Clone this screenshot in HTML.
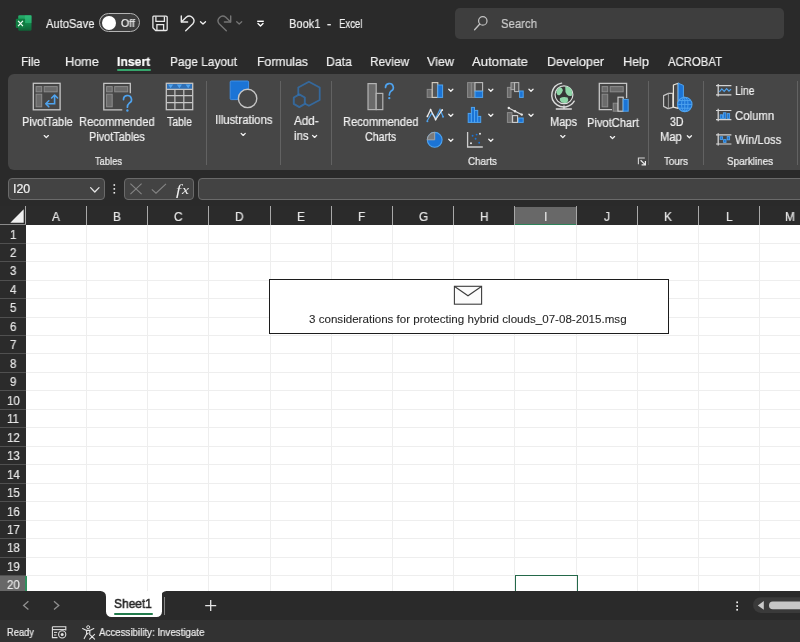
<!DOCTYPE html>
<html lang="en"><head><meta charset="utf-8"><title>Book1 - Excel</title>
<style>
html,body{margin:0;padding:0;background:#2a2a2a;}
#app{position:relative;width:800px;height:642px;overflow:hidden;background:#2a2a2a;font-family:"Liberation Sans", sans-serif;}
#app svg{position:absolute;overflow:visible;}
#app>div{will-change:transform;}
</style></head><body><div id="app">
<div style="position:absolute;left:8px;top:74.3px;width:800px;height:95.6px;background:#464646;border-radius:6px 0 0 6px;"></div>
<div style="position:absolute;left:99.4px;top:13px;width:39px;height:17.4px;border:1.4px solid #b4b4b4;border-radius:11px;background:#3c3c3c;"></div>
<div style="position:absolute;left:101.8px;top:16.1px;width:13.8px;height:13.8px;border-radius:50%;background:#fff;"></div>
<div style="position:absolute;left:454.8px;top:7.8px;width:329.4px;height:31.2px;background:#3e3e3e;border-radius:5px;"></div>
<div style="position:absolute;left:117px;top:69.2px;width:34px;height:2.1px;background:#36a66c;border-radius:1px;"></div>
<div style="position:absolute;left:206.2px;top:80.5px;width:1.4px;height:83.5px;background:#626262;"></div>
<div style="position:absolute;left:280px;top:80.5px;width:1.4px;height:83.5px;background:#626262;"></div>
<div style="position:absolute;left:331.4px;top:80.5px;width:1.4px;height:83.5px;background:#626262;"></div>
<div style="position:absolute;left:648.2px;top:80.5px;width:1.4px;height:83.5px;background:#626262;"></div>
<div style="position:absolute;left:703.2px;top:80.5px;width:1.4px;height:83.5px;background:#626262;"></div>
<div style="position:absolute;left:796.6px;top:80.5px;width:1.4px;height:83.5px;background:#626262;"></div>
<div style="position:absolute;left:8px;top:178px;width:96.8px;height:22.4px;background:#434343;border:1px solid #6a6a6a;border-radius:4px;box-sizing:border-box;"></div>
<div style="position:absolute;left:123.8px;top:178px;width:70px;height:22.4px;background:#434343;border:1px solid #6a6a6a;border-radius:4px;box-sizing:border-box;"></div>
<div style="position:absolute;left:198px;top:178px;width:620px;height:22.4px;background:#434343;border:1px solid #6a6a6a;border-radius:4px;box-sizing:border-box;"></div>
<div style="position:absolute;left:0px;top:206.2px;width:800px;height:385.8px;background:#2b2b2b;"></div>
<div style="position:absolute;left:26.3px;top:224.7px;width:773.7px;height:367.3px;background:#ffffff;"></div>
<div style="position:absolute;left:514.89px;top:207.2px;width:61.18px;height:17.5px;background:#686868;"></div>
<div style="position:absolute;left:514.89px;top:223.6px;width:61.18px;height:1.1px;background:#2d8259;"></div>
<div style="position:absolute;left:0px;top:575.4970000000001px;width:26.0px;height:18.463px;background:#686868;"></div>
<div style="position:absolute;left:24.7px;top:575.4970000000001px;width:1.5px;height:18.463px;background:#2f8f5d;"></div>
<div style="position:absolute;left:86.13px;top:224.7px;width:1px;height:367.3px;background:#eeeeee;"></div>
<div style="position:absolute;left:86.13px;top:206.2px;width:1px;height:18.5px;background:#a8a8a8;"></div>
<div style="position:absolute;left:147.31px;top:224.7px;width:1px;height:367.3px;background:#eeeeee;"></div>
<div style="position:absolute;left:147.31px;top:206.2px;width:1px;height:18.5px;background:#a8a8a8;"></div>
<div style="position:absolute;left:208.49px;top:224.7px;width:1px;height:367.3px;background:#eeeeee;"></div>
<div style="position:absolute;left:208.49px;top:206.2px;width:1px;height:18.5px;background:#a8a8a8;"></div>
<div style="position:absolute;left:269.67px;top:224.7px;width:1px;height:367.3px;background:#eeeeee;"></div>
<div style="position:absolute;left:269.67px;top:206.2px;width:1px;height:18.5px;background:#a8a8a8;"></div>
<div style="position:absolute;left:330.85px;top:224.7px;width:1px;height:367.3px;background:#eeeeee;"></div>
<div style="position:absolute;left:330.85px;top:206.2px;width:1px;height:18.5px;background:#a8a8a8;"></div>
<div style="position:absolute;left:392.03px;top:224.7px;width:1px;height:367.3px;background:#eeeeee;"></div>
<div style="position:absolute;left:392.03px;top:206.2px;width:1px;height:18.5px;background:#a8a8a8;"></div>
<div style="position:absolute;left:453.21px;top:224.7px;width:1px;height:367.3px;background:#eeeeee;"></div>
<div style="position:absolute;left:453.21px;top:206.2px;width:1px;height:18.5px;background:#a8a8a8;"></div>
<div style="position:absolute;left:514.39px;top:224.7px;width:1px;height:367.3px;background:#eeeeee;"></div>
<div style="position:absolute;left:514.39px;top:206.2px;width:1px;height:18.5px;background:#a8a8a8;"></div>
<div style="position:absolute;left:575.57px;top:224.7px;width:1px;height:367.3px;background:#eeeeee;"></div>
<div style="position:absolute;left:575.57px;top:206.2px;width:1px;height:18.5px;background:#a8a8a8;"></div>
<div style="position:absolute;left:636.75px;top:224.7px;width:1px;height:367.3px;background:#eeeeee;"></div>
<div style="position:absolute;left:636.75px;top:206.2px;width:1px;height:18.5px;background:#a8a8a8;"></div>
<div style="position:absolute;left:697.93px;top:224.7px;width:1px;height:367.3px;background:#eeeeee;"></div>
<div style="position:absolute;left:697.93px;top:206.2px;width:1px;height:18.5px;background:#a8a8a8;"></div>
<div style="position:absolute;left:759.11px;top:224.7px;width:1px;height:367.3px;background:#eeeeee;"></div>
<div style="position:absolute;left:759.11px;top:206.2px;width:1px;height:18.5px;background:#a8a8a8;"></div>
<div style="position:absolute;left:820.29px;top:224.7px;width:1px;height:367.3px;background:#eeeeee;"></div>
<div style="position:absolute;left:820.29px;top:206.2px;width:1px;height:18.5px;background:#a8a8a8;"></div>
<div style="position:absolute;left:25.400000000000002px;top:206.2px;width:1px;height:18.5px;background:#a8a8a8;"></div>
<div style="position:absolute;left:26.3px;top:242.66px;width:773.7px;height:1px;background:#eeeeee;"></div>
<div style="position:absolute;left:0px;top:242.66px;width:25.5px;height:1px;background:#505050;"></div>
<div style="position:absolute;left:26.3px;top:261.13px;width:773.7px;height:1px;background:#eeeeee;"></div>
<div style="position:absolute;left:0px;top:261.13px;width:25.5px;height:1px;background:#505050;"></div>
<div style="position:absolute;left:26.3px;top:279.59px;width:773.7px;height:1px;background:#eeeeee;"></div>
<div style="position:absolute;left:0px;top:279.59px;width:25.5px;height:1px;background:#505050;"></div>
<div style="position:absolute;left:26.3px;top:298.05px;width:773.7px;height:1px;background:#eeeeee;"></div>
<div style="position:absolute;left:0px;top:298.05px;width:25.5px;height:1px;background:#505050;"></div>
<div style="position:absolute;left:26.3px;top:316.51px;width:773.7px;height:1px;background:#eeeeee;"></div>
<div style="position:absolute;left:0px;top:316.51px;width:25.5px;height:1px;background:#505050;"></div>
<div style="position:absolute;left:26.3px;top:334.98px;width:773.7px;height:1px;background:#eeeeee;"></div>
<div style="position:absolute;left:0px;top:334.98px;width:25.5px;height:1px;background:#505050;"></div>
<div style="position:absolute;left:26.3px;top:353.44px;width:773.7px;height:1px;background:#eeeeee;"></div>
<div style="position:absolute;left:0px;top:353.44px;width:25.5px;height:1px;background:#505050;"></div>
<div style="position:absolute;left:26.3px;top:371.9px;width:773.7px;height:1px;background:#eeeeee;"></div>
<div style="position:absolute;left:0px;top:371.9px;width:25.5px;height:1px;background:#505050;"></div>
<div style="position:absolute;left:26.3px;top:390.37px;width:773.7px;height:1px;background:#eeeeee;"></div>
<div style="position:absolute;left:0px;top:390.37px;width:25.5px;height:1px;background:#505050;"></div>
<div style="position:absolute;left:26.3px;top:408.83px;width:773.7px;height:1px;background:#eeeeee;"></div>
<div style="position:absolute;left:0px;top:408.83px;width:25.5px;height:1px;background:#505050;"></div>
<div style="position:absolute;left:26.3px;top:427.29px;width:773.7px;height:1px;background:#eeeeee;"></div>
<div style="position:absolute;left:0px;top:427.29px;width:25.5px;height:1px;background:#505050;"></div>
<div style="position:absolute;left:26.3px;top:445.76px;width:773.7px;height:1px;background:#eeeeee;"></div>
<div style="position:absolute;left:0px;top:445.76px;width:25.5px;height:1px;background:#505050;"></div>
<div style="position:absolute;left:26.3px;top:464.22px;width:773.7px;height:1px;background:#eeeeee;"></div>
<div style="position:absolute;left:0px;top:464.22px;width:25.5px;height:1px;background:#505050;"></div>
<div style="position:absolute;left:26.3px;top:482.68px;width:773.7px;height:1px;background:#eeeeee;"></div>
<div style="position:absolute;left:0px;top:482.68px;width:25.5px;height:1px;background:#505050;"></div>
<div style="position:absolute;left:26.3px;top:501.14px;width:773.7px;height:1px;background:#eeeeee;"></div>
<div style="position:absolute;left:0px;top:501.14px;width:25.5px;height:1px;background:#505050;"></div>
<div style="position:absolute;left:26.3px;top:519.61px;width:773.7px;height:1px;background:#eeeeee;"></div>
<div style="position:absolute;left:0px;top:519.61px;width:25.5px;height:1px;background:#505050;"></div>
<div style="position:absolute;left:26.3px;top:538.07px;width:773.7px;height:1px;background:#eeeeee;"></div>
<div style="position:absolute;left:0px;top:538.07px;width:25.5px;height:1px;background:#505050;"></div>
<div style="position:absolute;left:26.3px;top:556.53px;width:773.7px;height:1px;background:#eeeeee;"></div>
<div style="position:absolute;left:0px;top:556.53px;width:25.5px;height:1px;background:#505050;"></div>
<div style="position:absolute;left:26.3px;top:575.0px;width:773.7px;height:1px;background:#eeeeee;"></div>
<div style="position:absolute;left:0px;top:575.0px;width:25.5px;height:1px;background:#505050;"></div>
<div style="position:absolute;left:0px;top:224.1px;width:25.5px;height:1px;background:#8a8a8a;"></div>
<svg style="left:9.6px;top:208.8px" width="14" height="14" viewBox="0 0 14 14"><path d="M13.7 0.3V13.7H0.3Z" fill="#f0f0f0"/></svg>
<div style="position:absolute;left:514.6px;top:574.6px;width:62.7px;height:20.5px;border:1.5px solid #24694a;box-sizing:border-box;"></div>
<div style="position:absolute;left:268.7px;top:278.7px;width:399.8px;height:55.2px;background:#fff;border:1.7px solid #1c1c1c;box-sizing:border-box;"></div>
<div style="position:absolute;left:0px;top:591.3px;width:800px;height:30px;background:#ffffff;"></div>
<div style="position:absolute;left:0px;top:591.3px;width:105.7px;height:29.2px;background:#2a2a2a;border-radius:0 5.5px 0 0;"></div>
<div style="position:absolute;left:161.4px;top:591.3px;width:640px;height:29.2px;background:#2a2a2a;border-radius:5.5px 0 0 0;"></div>
<div style="position:absolute;left:100px;top:612px;width:70px;height:8.5px;background:#2a2a2a;"></div>
<div style="position:absolute;left:0px;top:620.3px;width:800px;height:22px;background:#323232;"></div>
<div style="position:absolute;left:105.7px;top:591px;width:55.7px;height:26.3px;background:#fff;border-radius:0 0 5.5px 5.5px;"></div>
<div style="position:absolute;left:113.9px;top:612.6px;width:39px;height:2.2px;background:#217a4b;border-radius:1px;"></div>
<div style="position:absolute;left:164.2px;top:597.4px;width:1.2px;height:17.5px;background:#858585;"></div>
<div style='position:absolute;left:45.6px;top:14.54px;line-height:17.92px;height:17.92px;white-space:nowrap;font-family:"Liberation Sans", sans-serif;font-size:12.8px;font-weight:400;color:#f0f0f0;transform-origin:0 50%;transform:scaleX(0.8721);-webkit-text-stroke:0.22px #f0f0f0;'>AutoSave</div>
<div style='position:absolute;left:120.6px;top:15.6px;line-height:15.4px;height:15.4px;white-space:nowrap;font-family:"Liberation Sans", sans-serif;font-size:11px;font-weight:400;color:#f0f0f0;transform-origin:0 50%;transform:scaleX(0.9528);-webkit-text-stroke:0.22px #f0f0f0;'>Off</div>
<div style='position:absolute;left:288.6px;top:14.54px;line-height:17.92px;height:17.92px;white-space:nowrap;font-family:"Liberation Sans", sans-serif;font-size:12.8px;font-weight:400;color:#f0f0f0;transform-origin:0 50%;transform:scaleX(0.8651);-webkit-text-stroke:0.22px #f0f0f0;'>Book1</div>
<div style='position:absolute;left:327px;top:14.54px;line-height:17.92px;height:17.92px;white-space:nowrap;font-family:"Liberation Sans", sans-serif;font-size:12.8px;font-weight:400;color:#f0f0f0;transform-origin:0 50%;transform:scaleX(0.9846);-webkit-text-stroke:0.22px #f0f0f0;'>-</div>
<div style='position:absolute;left:338.6px;top:14.54px;line-height:17.92px;height:17.92px;white-space:nowrap;font-family:"Liberation Sans", sans-serif;font-size:12.8px;font-weight:400;color:#f0f0f0;transform-origin:0 50%;transform:scaleX(0.7477);-webkit-text-stroke:0.22px #f0f0f0;'>Excel</div>
<div style='position:absolute;left:501.2px;top:14.54px;line-height:17.92px;height:17.92px;white-space:nowrap;font-family:"Liberation Sans", sans-serif;font-size:12.8px;font-weight:400;color:#cdcdcd;transform-origin:0 50%;transform:scaleX(0.8879);-webkit-text-stroke:0.22px #cdcdcd;'>Search</div>
<div style='position:absolute;left:21px;top:52.76px;line-height:18.48px;height:18.48px;white-space:nowrap;font-family:"Liberation Sans", sans-serif;font-size:13.2px;font-weight:400;color:#f0f0f0;transform-origin:0 50%;transform:scaleX(0.8941);-webkit-text-stroke:0.22px #f0f0f0;'>File</div>
<div style='position:absolute;left:65px;top:52.76px;line-height:18.48px;height:18.48px;white-space:nowrap;font-family:"Liberation Sans", sans-serif;font-size:13.2px;font-weight:400;color:#f0f0f0;transform-origin:0 50%;transform:scaleX(0.9663);-webkit-text-stroke:0.22px #f0f0f0;'>Home</div>
<div style='position:absolute;left:169.6px;top:52.76px;line-height:18.48px;height:18.48px;white-space:nowrap;font-family:"Liberation Sans", sans-serif;font-size:13.2px;font-weight:400;color:#f0f0f0;transform-origin:0 50%;transform:scaleX(0.9046);-webkit-text-stroke:0.22px #f0f0f0;'>Page Layout</div>
<div style='position:absolute;left:257px;top:52.76px;line-height:18.48px;height:18.48px;white-space:nowrap;font-family:"Liberation Sans", sans-serif;font-size:13.2px;font-weight:400;color:#f0f0f0;transform-origin:0 50%;transform:scaleX(0.9278);-webkit-text-stroke:0.22px #f0f0f0;'>Formulas</div>
<div style='position:absolute;left:326px;top:52.76px;line-height:18.48px;height:18.48px;white-space:nowrap;font-family:"Liberation Sans", sans-serif;font-size:13.2px;font-weight:400;color:#f0f0f0;transform-origin:0 50%;transform:scaleX(0.9333);-webkit-text-stroke:0.22px #f0f0f0;'>Data</div>
<div style='position:absolute;left:370px;top:52.76px;line-height:18.48px;height:18.48px;white-space:nowrap;font-family:"Liberation Sans", sans-serif;font-size:13.2px;font-weight:400;color:#f0f0f0;transform-origin:0 50%;transform:scaleX(0.9017);-webkit-text-stroke:0.22px #f0f0f0;'>Review</div>
<div style='position:absolute;left:427px;top:52.76px;line-height:18.48px;height:18.48px;white-space:nowrap;font-family:"Liberation Sans", sans-serif;font-size:13.2px;font-weight:400;color:#f0f0f0;transform-origin:0 50%;transform:scaleX(0.9521);-webkit-text-stroke:0.22px #f0f0f0;'>View</div>
<div style='position:absolute;left:472px;top:52.76px;line-height:18.48px;height:18.48px;white-space:nowrap;font-family:"Liberation Sans", sans-serif;font-size:13.2px;font-weight:400;color:#f0f0f0;transform-origin:0 50%;transform:scaleX(0.9920);-webkit-text-stroke:0.22px #f0f0f0;'>Automate</div>
<div style='position:absolute;left:547px;top:52.76px;line-height:18.48px;height:18.48px;white-space:nowrap;font-family:"Liberation Sans", sans-serif;font-size:13.2px;font-weight:400;color:#f0f0f0;transform-origin:0 50%;transform:scaleX(0.9480);-webkit-text-stroke:0.22px #f0f0f0;'>Developer</div>
<div style='position:absolute;left:623px;top:52.76px;line-height:18.48px;height:18.48px;white-space:nowrap;font-family:"Liberation Sans", sans-serif;font-size:13.2px;font-weight:400;color:#f0f0f0;transform-origin:0 50%;transform:scaleX(0.9585);-webkit-text-stroke:0.22px #f0f0f0;'>Help</div>
<div style='position:absolute;left:668px;top:52.76px;line-height:18.48px;height:18.48px;white-space:nowrap;font-family:"Liberation Sans", sans-serif;font-size:13.2px;font-weight:400;color:#f0f0f0;transform-origin:0 50%;transform:scaleX(0.8601);-webkit-text-stroke:0.22px #f0f0f0;'>ACROBAT</div>
<div style='position:absolute;left:117.2px;top:52.76px;line-height:18.48px;height:18.48px;white-space:nowrap;font-family:"Liberation Sans", sans-serif;font-size:13.2px;font-weight:700;color:#ffffff;transform-origin:0 50%;transform:scaleX(0.9242);-webkit-text-stroke:0.22px #ffffff;'>Insert</div>
<div style='position:absolute;left:21.8px;top:114.39px;line-height:17.22px;height:17.22px;white-space:nowrap;font-family:"Liberation Sans", sans-serif;font-size:12.3px;font-weight:400;color:#f0f0f0;transform-origin:0 50%;transform:scaleX(0.8916);-webkit-text-stroke:0.22px #f0f0f0;'>PivotTable</div>
<div style='position:absolute;left:79.3px;top:114.39px;line-height:17.22px;height:17.22px;white-space:nowrap;font-family:"Liberation Sans", sans-serif;font-size:12.3px;font-weight:400;color:#f0f0f0;transform-origin:0 50%;transform:scaleX(0.9078);-webkit-text-stroke:0.22px #f0f0f0;'>Recommended</div>
<div style='position:absolute;left:89.3px;top:129.39px;line-height:17.22px;height:17.22px;white-space:nowrap;font-family:"Liberation Sans", sans-serif;font-size:12.3px;font-weight:400;color:#f0f0f0;transform-origin:0 50%;transform:scaleX(0.8857);-webkit-text-stroke:0.22px #f0f0f0;'>PivotTables</div>
<div style='position:absolute;left:167px;top:114.39px;line-height:17.22px;height:17.22px;white-space:nowrap;font-family:"Liberation Sans", sans-serif;font-size:12.3px;font-weight:400;color:#f0f0f0;transform-origin:0 50%;transform:scaleX(0.8502);-webkit-text-stroke:0.22px #f0f0f0;'>Table</div>
<div style='position:absolute;left:95px;top:154.06px;line-height:15.68px;height:15.68px;white-space:nowrap;font-family:"Liberation Sans", sans-serif;font-size:11.2px;font-weight:400;color:#f0f0f0;transform-origin:0 50%;transform:scaleX(0.8348);-webkit-text-stroke:0.22px #f0f0f0;'>Tables</div>
<div style='position:absolute;left:214.5px;top:112.39px;line-height:17.22px;height:17.22px;white-space:nowrap;font-family:"Liberation Sans", sans-serif;font-size:12.3px;font-weight:400;color:#f0f0f0;transform-origin:0 50%;transform:scaleX(0.9244);-webkit-text-stroke:0.22px #f0f0f0;'>Illustrations</div>
<div style='position:absolute;left:293.8px;top:112.99px;line-height:17.22px;height:17.22px;white-space:nowrap;font-family:"Liberation Sans", sans-serif;font-size:12.3px;font-weight:400;color:#f0f0f0;transform-origin:0 50%;transform:scaleX(0.9467);-webkit-text-stroke:0.22px #f0f0f0;'>Add-</div>
<div style='position:absolute;left:293.8px;top:127.79px;line-height:17.22px;height:17.22px;white-space:nowrap;font-family:"Liberation Sans", sans-serif;font-size:12.3px;font-weight:400;color:#f0f0f0;transform-origin:0 50%;transform:scaleX(0.9279);-webkit-text-stroke:0.22px #f0f0f0;'>ins</div>
<div style='position:absolute;left:342.9px;top:114.39px;line-height:17.22px;height:17.22px;white-space:nowrap;font-family:"Liberation Sans", sans-serif;font-size:12.3px;font-weight:400;color:#f0f0f0;transform-origin:0 50%;transform:scaleX(0.9054);-webkit-text-stroke:0.22px #f0f0f0;'>Recommended</div>
<div style='position:absolute;left:365px;top:129.39px;line-height:17.22px;height:17.22px;white-space:nowrap;font-family:"Liberation Sans", sans-serif;font-size:12.3px;font-weight:400;color:#f0f0f0;transform-origin:0 50%;transform:scaleX(0.8614);-webkit-text-stroke:0.22px #f0f0f0;'>Charts</div>
<div style='position:absolute;left:549.8px;top:114.39px;line-height:17.22px;height:17.22px;white-space:nowrap;font-family:"Liberation Sans", sans-serif;font-size:12.3px;font-weight:400;color:#f0f0f0;transform-origin:0 50%;transform:scaleX(0.8977);-webkit-text-stroke:0.22px #f0f0f0;'>Maps</div>
<div style='position:absolute;left:587.3px;top:114.79px;line-height:17.22px;height:17.22px;white-space:nowrap;font-family:"Liberation Sans", sans-serif;font-size:12.3px;font-weight:400;color:#f0f0f0;transform-origin:0 50%;transform:scaleX(0.9038);-webkit-text-stroke:0.22px #f0f0f0;'>PivotChart</div>
<div style='position:absolute;left:468px;top:154.06px;line-height:15.68px;height:15.68px;white-space:nowrap;font-family:"Liberation Sans", sans-serif;font-size:11.2px;font-weight:400;color:#f0f0f0;transform-origin:0 50%;transform:scaleX(0.8800);-webkit-text-stroke:0.22px #f0f0f0;'>Charts</div>
<div style='position:absolute;left:669.6px;top:114.29px;line-height:17.22px;height:17.22px;white-space:nowrap;font-family:"Liberation Sans", sans-serif;font-size:12.3px;font-weight:400;color:#f0f0f0;transform-origin:0 50%;transform:scaleX(0.8643);-webkit-text-stroke:0.22px #f0f0f0;'>3D</div>
<div style='position:absolute;left:660px;top:129.29px;line-height:17.22px;height:17.22px;white-space:nowrap;font-family:"Liberation Sans", sans-serif;font-size:12.3px;font-weight:400;color:#f0f0f0;transform-origin:0 50%;transform:scaleX(0.9113);-webkit-text-stroke:0.22px #f0f0f0;'>Map</div>
<div style='position:absolute;left:664px;top:154.06px;line-height:15.68px;height:15.68px;white-space:nowrap;font-family:"Liberation Sans", sans-serif;font-size:11.2px;font-weight:400;color:#f0f0f0;transform-origin:0 50%;transform:scaleX(0.8772);-webkit-text-stroke:0.22px #f0f0f0;'>Tours</div>
<div style='position:absolute;left:735px;top:82.69px;line-height:17.22px;height:17.22px;white-space:nowrap;font-family:"Liberation Sans", sans-serif;font-size:12.3px;font-weight:400;color:#f0f0f0;transform-origin:0 50%;transform:scaleX(0.8344);-webkit-text-stroke:0.22px #f0f0f0;'>Line</div>
<div style='position:absolute;left:735px;top:107.59px;line-height:17.22px;height:17.22px;white-space:nowrap;font-family:"Liberation Sans", sans-serif;font-size:12.3px;font-weight:400;color:#f0f0f0;transform-origin:0 50%;transform:scaleX(0.9251);-webkit-text-stroke:0.22px #f0f0f0;'>Column</div>
<div style='position:absolute;left:735px;top:132.19px;line-height:17.22px;height:17.22px;white-space:nowrap;font-family:"Liberation Sans", sans-serif;font-size:12.3px;font-weight:400;color:#f0f0f0;transform-origin:0 50%;transform:scaleX(0.9134);-webkit-text-stroke:0.22px #f0f0f0;'>Win/Loss</div>
<div style='position:absolute;left:727px;top:154.06px;line-height:15.68px;height:15.68px;white-space:nowrap;font-family:"Liberation Sans", sans-serif;font-size:11.2px;font-weight:400;color:#f0f0f0;transform-origin:0 50%;transform:scaleX(0.8806);-webkit-text-stroke:0.22px #f0f0f0;'>Sparklines</div>
<div style='position:absolute;left:12.8px;top:180.99px;line-height:17.22px;height:17.22px;white-space:nowrap;font-family:"Liberation Sans", sans-serif;font-size:12.3px;font-weight:400;color:#f0f0f0;transform-origin:0 50%;transform:scaleX(1.0053);-webkit-text-stroke:0.22px #f0f0f0;'>I20</div>
<div style='position:absolute;left:52.11px;top:208.62px;line-height:17.36px;height:17.36px;white-space:nowrap;font-family:"Liberation Sans", sans-serif;font-size:12.4px;font-weight:400;color:#e6e6e6;transform-origin:0 50%;transform:scaleX(0.9500);-webkit-text-stroke:0.22px #e6e6e6;'>A</div>
<div style='position:absolute;left:113.29px;top:208.62px;line-height:17.36px;height:17.36px;white-space:nowrap;font-family:"Liberation Sans", sans-serif;font-size:12.4px;font-weight:400;color:#e6e6e6;transform-origin:0 50%;transform:scaleX(0.9500);-webkit-text-stroke:0.22px #e6e6e6;'>B</div>
<div style='position:absolute;left:174.15px;top:208.62px;line-height:17.36px;height:17.36px;white-space:nowrap;font-family:"Liberation Sans", sans-serif;font-size:12.4px;font-weight:400;color:#e6e6e6;transform-origin:0 50%;transform:scaleX(0.9500);-webkit-text-stroke:0.22px #e6e6e6;'>C</div>
<div style='position:absolute;left:235.33px;top:208.62px;line-height:17.36px;height:17.36px;white-space:nowrap;font-family:"Liberation Sans", sans-serif;font-size:12.4px;font-weight:400;color:#e6e6e6;transform-origin:0 50%;transform:scaleX(0.9500);-webkit-text-stroke:0.22px #e6e6e6;'>D</div>
<div style='position:absolute;left:296.83px;top:208.62px;line-height:17.36px;height:17.36px;white-space:nowrap;font-family:"Liberation Sans", sans-serif;font-size:12.4px;font-weight:400;color:#e6e6e6;transform-origin:0 50%;transform:scaleX(0.9500);-webkit-text-stroke:0.22px #e6e6e6;'>E</div>
<div style='position:absolute;left:358.34px;top:208.62px;line-height:17.36px;height:17.36px;white-space:nowrap;font-family:"Liberation Sans", sans-serif;font-size:12.4px;font-weight:400;color:#e6e6e6;transform-origin:0 50%;transform:scaleX(0.9500);-webkit-text-stroke:0.22px #e6e6e6;'>F</div>
<div style='position:absolute;left:418.54px;top:208.62px;line-height:17.36px;height:17.36px;white-space:nowrap;font-family:"Liberation Sans", sans-serif;font-size:12.4px;font-weight:400;color:#e6e6e6;transform-origin:0 50%;transform:scaleX(0.9500);-webkit-text-stroke:0.22px #e6e6e6;'>G</div>
<div style='position:absolute;left:480.05px;top:208.62px;line-height:17.36px;height:17.36px;white-space:nowrap;font-family:"Liberation Sans", sans-serif;font-size:12.4px;font-weight:400;color:#e6e6e6;transform-origin:0 50%;transform:scaleX(0.9500);-webkit-text-stroke:0.22px #e6e6e6;'>H</div>
<div style='position:absolute;left:543.84px;top:208.62px;line-height:17.36px;height:17.36px;white-space:nowrap;font-family:"Liberation Sans", sans-serif;font-size:12.4px;font-weight:400;color:#e6e6e6;transform-origin:0 50%;transform:scaleX(0.9500);-webkit-text-stroke:0.22px #e6e6e6;'>I</div>
<div style='position:absolute;left:603.71px;top:208.62px;line-height:17.36px;height:17.36px;white-space:nowrap;font-family:"Liberation Sans", sans-serif;font-size:12.4px;font-weight:400;color:#e6e6e6;transform-origin:0 50%;transform:scaleX(0.9500);-webkit-text-stroke:0.22px #e6e6e6;'>J</div>
<div style='position:absolute;left:663.91px;top:208.62px;line-height:17.36px;height:17.36px;white-space:nowrap;font-family:"Liberation Sans", sans-serif;font-size:12.4px;font-weight:400;color:#e6e6e6;transform-origin:0 50%;transform:scaleX(0.9500);-webkit-text-stroke:0.22px #e6e6e6;'>K</div>
<div style='position:absolute;left:725.74px;top:208.62px;line-height:17.36px;height:17.36px;white-space:nowrap;font-family:"Liberation Sans", sans-serif;font-size:12.4px;font-weight:400;color:#e6e6e6;transform-origin:0 50%;transform:scaleX(0.9500);-webkit-text-stroke:0.22px #e6e6e6;'>L</div>
<div style='position:absolute;left:785.29px;top:208.62px;line-height:17.36px;height:17.36px;white-space:nowrap;font-family:"Liberation Sans", sans-serif;font-size:12.4px;font-weight:400;color:#e6e6e6;transform-origin:0 50%;transform:scaleX(0.9500);-webkit-text-stroke:0.22px #e6e6e6;'>M</div>
<div style='position:absolute;left:9.72px;top:226.55px;line-height:17.36px;height:17.36px;white-space:nowrap;font-family:"Liberation Sans", sans-serif;font-size:12.4px;font-weight:400;color:#e6e6e6;transform-origin:0 50%;transform:scaleX(0.9200);-webkit-text-stroke:0.22px #e6e6e6;'>1</div>
<div style='position:absolute;left:9.72px;top:245.01px;line-height:17.36px;height:17.36px;white-space:nowrap;font-family:"Liberation Sans", sans-serif;font-size:12.4px;font-weight:400;color:#e6e6e6;transform-origin:0 50%;transform:scaleX(0.9200);-webkit-text-stroke:0.22px #e6e6e6;'>2</div>
<div style='position:absolute;left:9.72px;top:263.48px;line-height:17.36px;height:17.36px;white-space:nowrap;font-family:"Liberation Sans", sans-serif;font-size:12.4px;font-weight:400;color:#e6e6e6;transform-origin:0 50%;transform:scaleX(0.9200);-webkit-text-stroke:0.22px #e6e6e6;'>3</div>
<div style='position:absolute;left:9.72px;top:281.94px;line-height:17.36px;height:17.36px;white-space:nowrap;font-family:"Liberation Sans", sans-serif;font-size:12.4px;font-weight:400;color:#e6e6e6;transform-origin:0 50%;transform:scaleX(0.9200);-webkit-text-stroke:0.22px #e6e6e6;'>4</div>
<div style='position:absolute;left:9.72px;top:300.4px;line-height:17.36px;height:17.36px;white-space:nowrap;font-family:"Liberation Sans", sans-serif;font-size:12.4px;font-weight:400;color:#e6e6e6;transform-origin:0 50%;transform:scaleX(0.9200);-webkit-text-stroke:0.22px #e6e6e6;'>5</div>
<div style='position:absolute;left:9.72px;top:318.87px;line-height:17.36px;height:17.36px;white-space:nowrap;font-family:"Liberation Sans", sans-serif;font-size:12.4px;font-weight:400;color:#e6e6e6;transform-origin:0 50%;transform:scaleX(0.9200);-webkit-text-stroke:0.22px #e6e6e6;'>6</div>
<div style='position:absolute;left:9.72px;top:337.33px;line-height:17.36px;height:17.36px;white-space:nowrap;font-family:"Liberation Sans", sans-serif;font-size:12.4px;font-weight:400;color:#e6e6e6;transform-origin:0 50%;transform:scaleX(0.9200);-webkit-text-stroke:0.22px #e6e6e6;'>7</div>
<div style='position:absolute;left:9.72px;top:355.79px;line-height:17.36px;height:17.36px;white-space:nowrap;font-family:"Liberation Sans", sans-serif;font-size:12.4px;font-weight:400;color:#e6e6e6;transform-origin:0 50%;transform:scaleX(0.9200);-webkit-text-stroke:0.22px #e6e6e6;'>8</div>
<div style='position:absolute;left:9.72px;top:374.26px;line-height:17.36px;height:17.36px;white-space:nowrap;font-family:"Liberation Sans", sans-serif;font-size:12.4px;font-weight:400;color:#e6e6e6;transform-origin:0 50%;transform:scaleX(0.9200);-webkit-text-stroke:0.22px #e6e6e6;'>9</div>
<div style='position:absolute;left:6.55px;top:392.72px;line-height:17.36px;height:17.36px;white-space:nowrap;font-family:"Liberation Sans", sans-serif;font-size:12.4px;font-weight:400;color:#e6e6e6;transform-origin:0 50%;transform:scaleX(0.9200);-webkit-text-stroke:0.22px #e6e6e6;'>10</div>
<div style='position:absolute;left:6.98px;top:411.18px;line-height:17.36px;height:17.36px;white-space:nowrap;font-family:"Liberation Sans", sans-serif;font-size:12.4px;font-weight:400;color:#e6e6e6;transform-origin:0 50%;transform:scaleX(0.9200);-webkit-text-stroke:0.22px #e6e6e6;'>11</div>
<div style='position:absolute;left:6.55px;top:429.64px;line-height:17.36px;height:17.36px;white-space:nowrap;font-family:"Liberation Sans", sans-serif;font-size:12.4px;font-weight:400;color:#e6e6e6;transform-origin:0 50%;transform:scaleX(0.9200);-webkit-text-stroke:0.22px #e6e6e6;'>12</div>
<div style='position:absolute;left:6.55px;top:448.11px;line-height:17.36px;height:17.36px;white-space:nowrap;font-family:"Liberation Sans", sans-serif;font-size:12.4px;font-weight:400;color:#e6e6e6;transform-origin:0 50%;transform:scaleX(0.9200);-webkit-text-stroke:0.22px #e6e6e6;'>13</div>
<div style='position:absolute;left:6.55px;top:466.57px;line-height:17.36px;height:17.36px;white-space:nowrap;font-family:"Liberation Sans", sans-serif;font-size:12.4px;font-weight:400;color:#e6e6e6;transform-origin:0 50%;transform:scaleX(0.9200);-webkit-text-stroke:0.22px #e6e6e6;'>14</div>
<div style='position:absolute;left:6.55px;top:485.03px;line-height:17.36px;height:17.36px;white-space:nowrap;font-family:"Liberation Sans", sans-serif;font-size:12.4px;font-weight:400;color:#e6e6e6;transform-origin:0 50%;transform:scaleX(0.9200);-webkit-text-stroke:0.22px #e6e6e6;'>15</div>
<div style='position:absolute;left:6.55px;top:503.5px;line-height:17.36px;height:17.36px;white-space:nowrap;font-family:"Liberation Sans", sans-serif;font-size:12.4px;font-weight:400;color:#e6e6e6;transform-origin:0 50%;transform:scaleX(0.9200);-webkit-text-stroke:0.22px #e6e6e6;'>16</div>
<div style='position:absolute;left:6.55px;top:521.96px;line-height:17.36px;height:17.36px;white-space:nowrap;font-family:"Liberation Sans", sans-serif;font-size:12.4px;font-weight:400;color:#e6e6e6;transform-origin:0 50%;transform:scaleX(0.9200);-webkit-text-stroke:0.22px #e6e6e6;'>17</div>
<div style='position:absolute;left:6.55px;top:540.42px;line-height:17.36px;height:17.36px;white-space:nowrap;font-family:"Liberation Sans", sans-serif;font-size:12.4px;font-weight:400;color:#e6e6e6;transform-origin:0 50%;transform:scaleX(0.9200);-webkit-text-stroke:0.22px #e6e6e6;'>18</div>
<div style='position:absolute;left:6.55px;top:558.89px;line-height:17.36px;height:17.36px;white-space:nowrap;font-family:"Liberation Sans", sans-serif;font-size:12.4px;font-weight:400;color:#e6e6e6;transform-origin:0 50%;transform:scaleX(0.9200);-webkit-text-stroke:0.22px #e6e6e6;'>19</div>
<div style='position:absolute;left:6.55px;top:577.35px;line-height:17.36px;height:17.36px;white-space:nowrap;font-family:"Liberation Sans", sans-serif;font-size:12.4px;font-weight:400;color:#e6e6e6;transform-origin:0 50%;transform:scaleX(0.9200);-webkit-text-stroke:0.22px #e6e6e6;'>20</div>
<div style='position:absolute;left:309px;top:312.46px;line-height:15.68px;height:15.68px;white-space:nowrap;font-family:"Liberation Sans", sans-serif;font-size:11.2px;font-weight:400;color:#262626;transform-origin:0 50%;transform:scaleX(1.0359);-webkit-text-stroke:0.08px #262626;'>3 considerations for protecting hybrid clouds_07-08-2015.msg</div>
<div style='position:absolute;left:114.3px;top:594.82px;line-height:18.76px;height:18.76px;white-space:nowrap;font-family:"Liberation Sans", sans-serif;font-size:13.4px;font-weight:400;color:#262626;transform-origin:0 50%;transform:scaleX(0.8927);-webkit-text-stroke:0.55px #262626;'>Sheet1</div>
<div style='position:absolute;left:7px;top:625.21px;line-height:14.98px;height:14.98px;white-space:nowrap;font-family:"Liberation Sans", sans-serif;font-size:10.7px;font-weight:400;color:#ececec;transform-origin:0 50%;transform:scaleX(0.8736);-webkit-text-stroke:0.22px #ececec;'>Ready</div>
<div style='position:absolute;left:99.4px;top:625.21px;line-height:14.98px;height:14.98px;white-space:nowrap;font-family:"Liberation Sans", sans-serif;font-size:10.7px;font-weight:400;color:#ececec;transform-origin:0 50%;transform:scaleX(0.9098);-webkit-text-stroke:0.22px #ececec;'>Accessibility: Investigate</div>
<div style='position:absolute;left:176.4px;top:178.55px;line-height:21.7px;height:21.7px;white-space:nowrap;font-family:"Liberation Serif", serif;font-size:15.5px;font-weight:400;color:#f0f0f0;transform-origin:0 50%;transform:scaleX(1.1594);-webkit-text-stroke:0px #f0f0f0;font-style:italic;'>f</div>
<div style='position:absolute;left:181.6px;top:181.15px;line-height:18.9px;height:18.9px;white-space:nowrap;font-family:"Liberation Serif", serif;font-size:13.5px;font-weight:400;color:#f0f0f0;transform-origin:0 50%;transform:scaleX(1.1667);-webkit-text-stroke:0px #f0f0f0;font-style:italic;'>x</div>
<svg style="left:0;top:0" width="800" height="642" viewBox="0 0 800 642">
<defs><linearGradient id="xg" x1="0" y1="0" x2="0" y2="1"><stop offset="0" stop-color="#27b06d"/><stop offset=".5" stop-color="#12894c"/><stop offset="1" stop-color="#0f6236"/></linearGradient></defs>
<rect x="18.2" y="15.3" width="13.3" height="15.4" rx="1.3" fill="url(#xg)"/>
<rect x="24.8" y="15.3" width="6.7" height="7.7" fill="#33c481" opacity=".55"/>
<rect x="15.8" y="18.8" width="9.3" height="9.3" rx="1" fill="#107c41"/>
<path d="M18.1 20.8L22.9 26.1M22.9 20.8L18.1 26.1" stroke="#f0fff6" stroke-width="1.25" fill="none"/>
<path d="M153.6 16.2H166a1.2 1.2 0 0 1 1.2 1.2V29.3a1.2 1.2 0 0 1-1.2 1.2H155.6L152.9 27.8V17a.8.8 0 0 1 .7-.8Z" fill="none" stroke="#e9e9e9" stroke-width="1.3" stroke-linejoin="round"/>
<path d="M155.9 16.4V21.4H164.4V16.4" fill="none" stroke="#e9e9e9" stroke-width="1.3"/>
<path d="M156.9 30.4V24.6H163.6V30.4" fill="none" stroke="#e9e9e9" stroke-width="1.3"/>
<path d="M181.3 16V22H187.6" fill="none" stroke="#e9e9e9" stroke-width="1.4" stroke-linecap="round" stroke-linejoin="round"/>
<path d="M181.6 21.7L186.2 17.3A4.7 4.7 0 0 1 192.9 23.8L185.7 30.8" fill="none" stroke="#e9e9e9" stroke-width="1.4" stroke-linecap="round" stroke-linejoin="round"/>
<path d="M200.50 21.65L203.00 23.95L205.50 21.65" fill="none" stroke="#f2f2f2" stroke-width="1.3" stroke-linecap="round" stroke-linejoin="round"/>
<path d="M230.7 16V22H224.4" fill="none" stroke="#757575" stroke-width="1.4" stroke-linecap="round" stroke-linejoin="round"/>
<path d="M230.4 21.7L225.8 17.3A4.7 4.7 0 0 0 219.1 23.8L226.3 30.8" fill="none" stroke="#757575" stroke-width="1.4" stroke-linecap="round" stroke-linejoin="round"/>
<path d="M236.70 21.65L239.20 23.95L241.70 21.65" fill="none" stroke="#757575" stroke-width="1.3" stroke-linecap="round" stroke-linejoin="round"/>
<path d="M257.2 21.3H263.8" stroke="#fff" stroke-width="1.4" fill="none"/>
<path d="M258.00 23.55L260.50 26.05L263.00 23.55" fill="none" stroke="#fff" stroke-width="1.35" stroke-linecap="round" stroke-linejoin="round"/>
<circle cx="482.8" cy="20.9" r="4.2" fill="none" stroke="#c4c4c4" stroke-width="1.2"/>
<path d="M479.8 24L474.6 29.8" stroke="#c4c4c4" stroke-width="1.3" stroke-linecap="round"/>
<path d="M90.60 187.60L94.80 192.00L99.00 187.60" fill="none" stroke="#e4e4e4" stroke-width="1.3" stroke-linecap="round" stroke-linejoin="round"/>
<rect x="113.5" y="184.2" width="1.6" height="1.6" fill="#f0f0f0"/>
<rect x="113.5" y="188.1" width="1.6" height="1.6" fill="#f0f0f0"/>
<rect x="113.5" y="192.0" width="1.6" height="1.6" fill="#f0f0f0"/>
<path d="M130.4 183.6L141.6 194.2M141.6 183.6L130.4 194.2" stroke="#858585" stroke-width="1.1" fill="none"/>
<path d="M151.8 189.4L156 193.2L166 183.9" stroke="#858585" stroke-width="1.1" fill="none"/>
<path d="M28.4 601.2L23.6 605.4L28.4 609.6" fill="none" stroke="#8f8f8f" stroke-width="1.3"/>
<path d="M54 601.2L58.8 605.4L54 609.6" fill="none" stroke="#8f8f8f" stroke-width="1.3"/>
<path d="M205.2 605.6H216.2M210.7 600.1V611.1" stroke="#e6e6e6" stroke-width="1.3" fill="none"/>
<rect x="736.3" y="601.5" width="1.7" height="1.7" fill="#f2f2f2"/>
<rect x="736.3" y="605.2" width="1.7" height="1.7" fill="#f2f2f2"/>
<rect x="736.3" y="608.9000000000001" width="1.7" height="1.7" fill="#f2f2f2"/>
<rect x="753" y="597.3" width="60" height="15.6" rx="7.8" fill="#3a3a3a"/>
<path d="M757.8 605.4L763.8 601V609.8Z" fill="#c9c9c9"/>
<rect x="769" y="601.6" width="50" height="7.6" rx="3.8" fill="#c6c6c6"/>
<path d="M52.4 626.8H65.8V630.5M52.4 626.8V637.6H57.5" fill="none" stroke="#e2e2e2" stroke-width="1.1"/>
<path d="M52.4 629.6H65.8" stroke="#e2e2e2" stroke-width="1.1"/>
<path d="M54 632.4H57.2M54 635H56.4" stroke="#e2e2e2" stroke-width="1"/>
<circle cx="62.2" cy="634.4" r="3.6" fill="none" stroke="#e2e2e2" stroke-width="1.1"/>
<circle cx="62.2" cy="634.4" r="1.5" fill="#e2e2e2"/>
<circle cx="88.2" cy="627.2" r="1.5" fill="none" stroke="#e2e2e2" stroke-width="1"/>
<path d="M82.6 628.6L86.6 630.4H89.8L93.8 628.6M86.6 630.4V634L84.2 638.6M89.8 630.4V633.4M86.8 634.4L88.2 633.2" fill="none" stroke="#e2e2e2" stroke-width="1.1" stroke-linecap="round" stroke-linejoin="round"/>
<path d="M89.6 634.4L94.6 639.2M94.6 634.4L89.6 639.2" stroke="#e2e2e2" stroke-width="1.1" stroke-linecap="round"/>
<rect x="454.4" y="286.3" width="27.2" height="17.9" fill="#fbfbfb" stroke="#3c3c3c" stroke-width="1.1"/>
<path d="M454.6 286.5L468 295.8L481.4 286.5" fill="none" stroke="#3c3c3c" stroke-width="1.1"/>
<rect x="33.3" y="83.3" width="26.8" height="26.5" fill="none" stroke="#c6c6c6" stroke-width="1.3"/>
<rect x="36.099999999999994" y="86.6" width="5.6" height="5.2" fill="#6b6b6b" stroke="#8c8c8c" stroke-width="1"/>
<rect x="44.199999999999996" y="86.6" width="13" height="5.2" fill="#6b6b6b" stroke="#8c8c8c" stroke-width="1"/>
<rect x="36.099999999999994" y="94.2" width="5.6" height="12.6" fill="#6b6b6b" stroke="#8c8c8c" stroke-width="1"/>
<path d="M46 103.8H54.6V95.2" fill="none" stroke="#4fa3ee" stroke-width="1.6"/>
<path d="M48.8 100.8L45.8 103.8L48.8 106.8M51.6 98L54.6 95L57.6 98" fill="none" stroke="#4fa3ee" stroke-width="1.6" stroke-linecap="round" stroke-linejoin="round"/>
<path d="M44.25 135.57L46.30 137.62L48.35 135.57" fill="none" stroke="#f2f2f2" stroke-width="1.3" stroke-linecap="round" stroke-linejoin="round"/>
<path d="M122.3 109.8H103.8V83.3H130.3V93.3" fill="none" stroke="#c6c6c6" stroke-width="1.3"/>
<rect x="106.6" y="86.6" width="5.6" height="5.2" fill="#6b6b6b" stroke="#8c8c8c" stroke-width="1"/>
<rect x="114.7" y="86.6" width="13" height="5.2" fill="#6b6b6b" stroke="#8c8c8c" stroke-width="1"/>
<rect x="106.6" y="94.2" width="5.6" height="12.6" fill="#6b6b6b" stroke="#8c8c8c" stroke-width="1"/>
<path d="M123.51 99.58A3.98 3.98 0 1 1 129.33 103.05Q127.39 104.58 127.39 107.13" fill="none" stroke="#4fa3ee" stroke-width="1.7" stroke-linecap="round"/>
<circle cx="127.39" cy="110.49" r="1.17" fill="#4fa3ee"/>
<rect x="166.3" y="83.3" width="26.4" height="26.4" fill="#4b4b4b" stroke="#c6c6c6" stroke-width="1.3"/>
<rect x="167" y="84" width="25" height="5" fill="#2f6fb5"/>
<path d="M168.0 84.6H173.2L170.6 88.2Z" fill="#4fa3ee"/>
<path d="M176.8 84.6H182.0L179.4 88.2Z" fill="#4fa3ee"/>
<path d="M185.6 84.6H190.79999999999998L188.2 88.2Z" fill="#4fa3ee"/>
<path d="M166.3 89.3H192.7M166.3 95.7H192.7M166.3 102.6H192.7M174.9 89.3V109.7M183.8 89.3V109.7" stroke="#c6c6c6" stroke-width="1.2" fill="none"/>
<rect x="230.2" y="81" width="18.4" height="18.6" rx="1" fill="#1b74d6" stroke="#3f8fe6" stroke-width="1"/>
<circle cx="247.6" cy="98.4" r="9.2" fill="#464646" stroke="#c6c6c6" stroke-width="1.4"/>
<path d="M241.15 133.38L243.20 135.43L245.25 133.38" fill="none" stroke="#f2f2f2" stroke-width="1.3" stroke-linecap="round" stroke-linejoin="round"/>
<path d="M298.3 94.4V87.5L308.9 81.7L319.7 87.5V100L308.9 105.8L305.6 104" fill="none" stroke="#2f76bd" stroke-width="1.8" stroke-linejoin="round" stroke-linecap="round" opacity=".72"/>
<path d="M299.3 94.4L304.8 97.5V103.9L299.3 107.1L293.8 103.9V97.5Z" fill="none" stroke="#2f76bd" stroke-width="1.9" stroke-linejoin="round" opacity=".72"/>
<path d="M312.55 135.38L314.60 137.43L316.65 135.38" fill="none" stroke="#f2f2f2" stroke-width="1.3" stroke-linecap="round" stroke-linejoin="round"/>
<rect x="368" y="83.6" width="8.2" height="26" fill="#6b6b6b" stroke="#b4b4b4" stroke-width="1.2"/>
<rect x="376.2" y="93.4" width="6.6" height="16.2" fill="#505050" stroke="#b4b4b4" stroke-width="1.2"/>
<path d="M385.50 87.50A3.90 3.90 0 1 1 391.20 90.90Q389.30 92.40 389.30 94.90" fill="none" stroke="#4fa3ee" stroke-width="1.7" stroke-linecap="round"/>
<circle cx="389.30" cy="98.20" r="1.15" fill="#4fa3ee"/>
<rect x="427.2" y="89.4" width="5" height="8" fill="#6b6b6b" stroke="#8c8c8c" stroke-width="1"/>
<rect x="432.2" y="82.6" width="5.6" height="14.8" fill="#555" stroke="#d8d0c4" stroke-width="1.1"/>
<rect x="437.8" y="85" width="4.8" height="12.4" fill="#1b74d6" stroke="#4fa3ee" stroke-width="1"/>
<rect x="467.6" y="82.6" width="7.4" height="14.8" fill="#6b6b6b" stroke="#8c8c8c" stroke-width="1"/>
<path d="M471.3 82.6V97.4" stroke="#8c8c8c" stroke-width="1"/>
<rect x="475" y="82.6" width="7.6" height="8.6" fill="#4a4a4a" stroke="#bdbdbd" stroke-width="1.1"/>
<rect x="475" y="91.2" width="7.6" height="6.2" fill="#1b74d6" stroke="#4fa3ee" stroke-width="1"/>
<rect x="507.4" y="87.4" width="3.6" height="10" fill="#6b6b6b" stroke="#8c8c8c" stroke-width="1"/>
<rect x="511" y="82.6" width="3.6" height="7" fill="#6b6b6b" stroke="#a8a8a8" stroke-width="1"/>
<rect x="514.6" y="82.6" width="4.2" height="9" fill="#555" stroke="#bdbdbd" stroke-width="1"/>
<rect x="519.6" y="91" width="3.6" height="6.4" fill="#1b74d6" stroke="#4fa3ee" stroke-width="1"/>
<path d="M427.2 120.8L431.6 113.4L435.8 118L440 109.4L443 116.4" fill="none" stroke="#4fa3ee" stroke-width="1.2"/>
<path d="M427.4 116.4L430.6 109.8L435.6 119.6L442.2 110" fill="none" stroke="#e6e6e6" stroke-width="1.3"/>
<circle cx="427.4" cy="121.2" r="1" fill="#4fa3ee"/>
<circle cx="443" cy="116.8" r="1" fill="#4fa3ee"/>
<circle cx="427.4" cy="116.4" r=".9" fill="#f0f0f0"/>
<circle cx="430.6" cy="109.8" r=".9" fill="#f0f0f0"/>
<circle cx="435.6" cy="119.6" r=".9" fill="#f0f0f0"/>
<circle cx="442.2" cy="110" r=".9" fill="#f0f0f0"/>
<rect x="468.2" y="113.4" width="3.2" height="9.0" fill="#1b74d6" stroke="#4fa3ee" stroke-width="1"/>
<rect x="471.4" y="107.4" width="3.1" height="15.0" fill="#1b74d6" stroke="#4fa3ee" stroke-width="1"/>
<rect x="474.5" y="110.4" width="3.2" height="12.0" fill="#1b74d6" stroke="#4fa3ee" stroke-width="1"/>
<rect x="477.7" y="116.4" width="3" height="6.0" fill="#1b74d6" stroke="#4fa3ee" stroke-width="1"/>
<rect x="507.4" y="112.6" width="4.6" height="9.8" fill="#6b6b6b" stroke="#8c8c8c" stroke-width="1"/>
<rect x="512.6" y="115.6" width="5" height="6.8" fill="#4a4a4a" stroke="#d0d0d0" stroke-width="1.1"/>
<rect x="518.6" y="118" width="4.6" height="4.4" fill="#1b74d6" stroke="#4fa3ee" stroke-width="1"/>
<path d="M508.8 108L515 111.2L521.8 114.6" stroke="#dcdcdc" stroke-width="1.2" fill="none"/>
<circle cx="508.8" cy="108" r="1.2" fill="#e6e6e6"/>
<circle cx="515" cy="111.2" r="1.2" fill="#e6e6e6"/>
<circle cx="521.8" cy="114.6" r="1.2" fill="#e6e6e6"/>
<circle cx="434.7" cy="139.8" r="7.4" fill="#1b74d6" stroke="#4fa3ee" stroke-width="1.1"/>
<path d="M434.7 139.8V132.4A7.4 7.4 0 0 0 427.3 139.8Z" fill="#7b7b7b" stroke="#a6a6a6" stroke-width="1"/>
<path d="M467.6 132V147H482.8" fill="none" stroke="#cdcdcd" stroke-width="1.3"/>
<circle cx="480" cy="133.8" r=".95" fill="#eeeeee"/>
<circle cx="471" cy="143.3" r=".95" fill="#eeeeee"/>
<circle cx="472.6" cy="135.8" r=".95" fill="#1b74d6"/>
<circle cx="475.6" cy="138.8" r=".95" fill="#1b74d6"/>
<circle cx="479.2" cy="142.8" r=".95" fill="#1b74d6"/>
<circle cx="476.6" cy="134.6" r=".95" fill="#1b74d6"/>
<path d="M448.75 89.17L450.80 91.23L452.85 89.17" fill="none" stroke="#f2f2f2" stroke-width="1.3" stroke-linecap="round" stroke-linejoin="round"/>
<path d="M488.75 89.17L490.80 91.23L492.85 89.17" fill="none" stroke="#f2f2f2" stroke-width="1.3" stroke-linecap="round" stroke-linejoin="round"/>
<path d="M528.95 89.17L531.00 91.23L533.05 89.17" fill="none" stroke="#f2f2f2" stroke-width="1.3" stroke-linecap="round" stroke-linejoin="round"/>
<path d="M448.75 114.17L450.80 116.23L452.85 114.17" fill="none" stroke="#f2f2f2" stroke-width="1.3" stroke-linecap="round" stroke-linejoin="round"/>
<path d="M488.75 114.17L490.80 116.23L492.85 114.17" fill="none" stroke="#f2f2f2" stroke-width="1.3" stroke-linecap="round" stroke-linejoin="round"/>
<path d="M528.95 114.17L531.00 116.23L533.05 114.17" fill="none" stroke="#f2f2f2" stroke-width="1.3" stroke-linecap="round" stroke-linejoin="round"/>
<path d="M448.75 139.17L450.80 141.22L452.85 139.17" fill="none" stroke="#f2f2f2" stroke-width="1.3" stroke-linecap="round" stroke-linejoin="round"/>
<path d="M488.75 139.17L490.80 141.22L492.85 139.17" fill="none" stroke="#f2f2f2" stroke-width="1.3" stroke-linecap="round" stroke-linejoin="round"/>
<circle cx="564" cy="94.8" r="8.9" fill="#353535" stroke="#dcdcdc" stroke-width="1.2"/>
<path d="M556.2 92.2Q556.8 88.6 559.8 87.2Q562.6 87.6 562.8 90.4Q562.2 93.4 559.6 95.2Q557.2 95.8 556.2 92.2Z" fill="#8fd6a8"/>
<path d="M565.2 86.6Q569.2 86.2 571.4 89.2Q572.6 92.6 571.8 95.8Q569 96.8 566.8 94.4Q564.8 92.4 565.4 89.8Z" fill="#8fd6a8"/>
<path d="M559.8 98.2Q563.6 96.2 567.6 97.6Q569.2 100 567.2 102.4Q563.8 103.6 561 102Q559.2 100.4 559.8 98.2Z" fill="#8fd6a8"/>
<path d="M561.6 83.1A12 12 0 0 0 557 104.8A12 12 0 0 0 574.2 101.2" fill="none" stroke="#dcdcdc" stroke-width="1.4" stroke-linecap="round"/>
<path d="M564 105.6V108.8M555.8 109H571.8" stroke="#dcdcdc" stroke-width="1.4" fill="none"/>
<path d="M560.75 135.57L562.80 137.62L564.85 135.57" fill="none" stroke="#f2f2f2" stroke-width="1.3" stroke-linecap="round" stroke-linejoin="round"/>
<path d="M612 109.7H599.3V83.3H626.6V98" fill="none" stroke="#c6c6c6" stroke-width="1.3"/>
<rect x="602.1" y="86.6" width="5.6" height="5.2" fill="#6b6b6b" stroke="#8c8c8c" stroke-width="1"/>
<rect x="610.2" y="86.6" width="13" height="5.2" fill="#6b6b6b" stroke="#8c8c8c" stroke-width="1"/>
<rect x="602.1" y="94.2" width="5.6" height="12.6" fill="#6b6b6b" stroke="#8c8c8c" stroke-width="1"/>
<rect x="613.2" y="103.2" width="4.8" height="8" fill="#6b6b6b" stroke="#8c8c8c" stroke-width="1"/>
<rect x="618" y="97.2" width="5.2" height="14" fill="#4d4d4d" stroke="#d8d8d8" stroke-width="1.1"/>
<rect x="623.2" y="99.4" width="5" height="11.8" fill="#1b74d6" stroke="#4fa3ee" stroke-width="1"/>
<path d="M610.45 136.57L612.50 138.62L614.55 136.57" fill="none" stroke="#f2f2f2" stroke-width="1.3" stroke-linecap="round" stroke-linejoin="round"/>
<path d="M644.8 158H638.4V164.2" fill="none" stroke="#d6d6d6" stroke-width="1.1"/>
<path d="M640.6 160.2L645.2 164.6M645.4 161V164.8H641.6" fill="none" stroke="#ececec" stroke-width="1.2"/>
<path d="M663.6 95.6L668.6 93.4H672.8V107.4L668 108.6L663.6 106.4Z" fill="#3f3f3f" stroke="#c6c6c6" stroke-width="1.2" stroke-linejoin="round"/>
<path d="M668.4 93.6V108.4" stroke="#9a9a9a" stroke-width="1"/>
<path d="M673.4 85L678.2 83.2V108.4L673.4 107.2Z" fill="#4a4a4a" stroke="#ece6da" stroke-width="1.2" stroke-linejoin="round"/>
<path d="M678.2 83.2L683.4 85.4V100H678.2Z" fill="#1b74d6" stroke="#4fa3ee" stroke-width="1" stroke-linejoin="round"/>
<circle cx="684.8" cy="104.4" r="7.2" fill="#1b74d6" stroke="#4fa3ee" stroke-width="1.1"/>
<ellipse cx="684.8" cy="104.4" rx="3.2" ry="7.2" fill="none" stroke="#4fa3ee" stroke-width="1"/>
<path d="M677.6 104.4H692M678.8 100.6H690.8M678.8 108.2H690.8M684.8 97.2V111.6" stroke="#4fa3ee" stroke-width="1" fill="none"/>
<path d="M687.35 135.78L689.40 137.83L691.45 135.78" fill="none" stroke="#f2f2f2" stroke-width="1.3" stroke-linecap="round" stroke-linejoin="round"/>
<path d="M716 85.7H731.4M716 94.8H731.4" stroke="#d4d4d4" stroke-width="1.2" fill="none"/>
<path d="M718.2 84.0V96.4" stroke="#d4d4d4" stroke-width="1.3" fill="none"/>
<path d="M719.4 91.8L721.8 88.8L724.2 91.4L726.6 88.60000000000001L729 91.2L731 89.2" fill="none" stroke="#4fa3ee" stroke-width="1.2"/>
<path d="M716 110.5H731.4M716 119.6H731.4" stroke="#d4d4d4" stroke-width="1.2" fill="none"/>
<path d="M718.2 108.8V121.2" stroke="#d4d4d4" stroke-width="1.3" fill="none"/>
<rect x="720.2" y="114.8" width="2.4" height="3.6" fill="#1b74d6" stroke="#4fa3ee" stroke-width=".9"/>
<rect x="723.4" y="112.8" width="2.4" height="5.6" fill="#1b74d6" stroke="#4fa3ee" stroke-width=".9"/>
<rect x="727.2" y="113.6" width="2.4" height="4.8" fill="#1b74d6" stroke="#4fa3ee" stroke-width=".9"/>
<path d="M716 134.9H731.4M716 144.0H731.4" stroke="#d4d4d4" stroke-width="1.2" fill="none"/>
<path d="M718.2 133.20000000000002V145.6" stroke="#d4d4d4" stroke-width="1.3" fill="none"/>
<rect x="720.2" y="136.8" width="2.4" height="2.6" fill="#1b74d6" stroke="#4fa3ee" stroke-width=".9"/>
<rect x="723.6" y="139.6" width="2.4" height="2.8" fill="#1b74d6" stroke="#4fa3ee" stroke-width=".9"/>
<rect x="727.2" y="136.6" width="2.4" height="3.2" fill="#1b74d6" stroke="#4fa3ee" stroke-width=".9"/>
</svg>
</div></body></html>
